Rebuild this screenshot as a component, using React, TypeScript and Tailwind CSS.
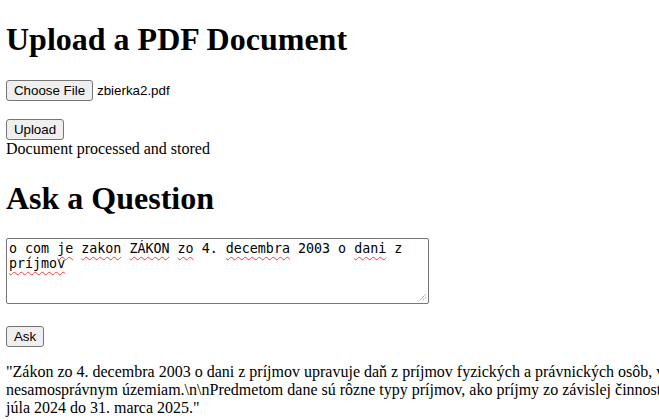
import React from "react";

// one misspelled word in the fake textarea, with the spellcheck squiggle
function Typo({ children }: { children: React.ReactNode }) {
  return (
    <span className="underline decoration-wavy decoration-[#ff3b3b] decoration-1 underline-offset-[3px]">
      {children}
    </span>
  );
}

function NativeButton({ label, width }: { label: string; width: string }) {
  return (
    <button
      type="button"
      className={`h-[21px] ${width} shrink-0 rounded-[3px] border border-[#767676] bg-[#efefef] px-[6px] text-center font-['Liberation_Sans',Arial,sans-serif] text-[13.333px] leading-[normal] text-black`}
    >
      {label}
    </button>
  );
}

export default function App() {
  const answer1 =
    '"Zákon zo 4. decembra 2003 o dani z príjmov upravuje daň z príjmov fyzických a právnických osôb, vrátane ich zdaňovania a rozpočtového určenia výnosu dane obciam a vyšším územným celkom a';
  const answer2 =
    "nesamosprávnym územiam.\\n\\nPredmetom dane sú rôzne typy príjmov, ako príjmy zo závislej činnosti, príjmy z podnikania, z kapitálového majetku a ďalšie. Zákon bol aktualizovaný s účinnosťou od 1.";
  const answer3 = 'júla 2024 do 31. marca 2025."';

  return (
    <div className="min-h-screen w-full overflow-hidden bg-white px-[6px] pt-px font-['Liberation_Serif','Times_New_Roman',serif] text-[16px] leading-[normal] text-black">
      <h1 className="mt-[20.44px] mb-[21.44px] text-[32px] font-bold leading-[normal]">
        Upload a PDF Document
      </h1>

      <div className="flex h-[21px] items-center">
        <NativeButton label="Choose File" width="w-[87px]" />
        <span className="ml-[4px] font-['Liberation_Sans',Arial,sans-serif] text-[13.333px] leading-[normal]">
          zbierka2.pdf
        </span>
      </div>
      <div className="h-[18.4px]" />
      <div className="flex h-[21px] items-center">
        <NativeButton label="Upload" width="w-[58px]" />
      </div>
      <div>Document processed and stored</div>

      <h1 className="mt-[21.44px] mb-[21.44px] text-[32px] font-bold leading-[normal]">
        Ask a Question
      </h1>

      <div className="relative h-[66px] w-[423px] rounded-[2px] border border-[#767676] p-[2px] font-['DejaVu_Sans_Mono',monospace] text-[13.333px] leading-[normal]">
        o com <Typo>je</Typo> <Typo>zakon</Typo> <Typo>ZÁKON</Typo> <Typo>zo</Typo> 4.{" "}
        <Typo>decembra</Typo> 2003 o <Typo>dani</Typo> z <Typo>príjmov</Typo>
        <svg
          className="absolute right-[2px] bottom-[2px]"
          width="8"
          height="8"
          viewBox="0 0 8 8"
        >
          <path d="M7.5 1.5 L1.5 7.5 M7.5 4.5 L4.5 7.5" stroke="#6b6b6b" strokeWidth="1" strokeDasharray="1 1" />
        </svg>
      </div>

      <div className="h-[22px]" />
      <div className="flex h-[21px] items-center">
        <NativeButton label="Ask" width="w-[38px]" />
      </div>

      <p className="mt-[16px] w-[1200px] whitespace-nowrap">
        {answer1}
        <br />
        {answer2}
        <br />
        {answer3}
      </p>
    </div>
  );
}
